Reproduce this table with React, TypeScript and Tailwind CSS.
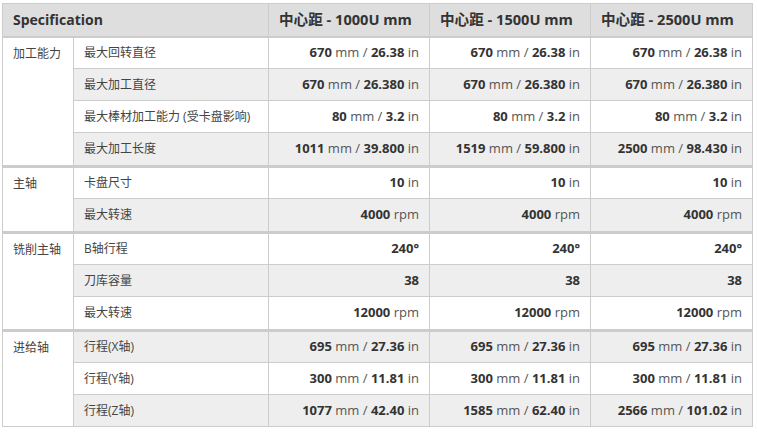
import React from 'react';

type Val = { n: string; u?: string; n2?: string; u2?: string };

interface Row {
  label: string;
  values: Val[];
}

interface Group {
  name: string;
  rows: Row[];
}

const mmIn = (a: string, b: string): Val => ({ n: a, u: 'mm /', n2: b, u2: 'in' });

const groups: Group[] = [
  {
    name: '加工能力',
    rows: [
      { label: '最大回转直径', values: [mmIn('670', '26.38'), mmIn('670', '26.38'), mmIn('670', '26.38')] },
      { label: '最大加工直径', values: [mmIn('670', '26.380'), mmIn('670', '26.380'), mmIn('670', '26.380')] },
      { label: '最大棒材加工能力 (受卡盘影响)', values: [mmIn('80', '3.2'), mmIn('80', '3.2'), mmIn('80', '3.2')] },
      { label: '最大加工长度', values: [mmIn('1011', '39.800'), mmIn('1519', '59.800'), mmIn('2500', '98.430')] },
    ],
  },
  {
    name: '主轴',
    rows: [
      { label: '卡盘尺寸', values: [{ n: '10', u: 'in' }, { n: '10', u: 'in' }, { n: '10', u: 'in' }] },
      { label: '最大转速', values: [{ n: '4000', u: 'rpm' }, { n: '4000', u: 'rpm' }, { n: '4000', u: 'rpm' }] },
    ],
  },
  {
    name: '铣削主轴',
    rows: [
      { label: 'B轴行程', values: [{ n: '240°' }, { n: '240°' }, { n: '240°' }] },
      { label: '刀库容量', values: [{ n: '38' }, { n: '38' }, { n: '38' }] },
      { label: '最大转速', values: [{ n: '12000', u: 'rpm' }, { n: '12000', u: 'rpm' }, { n: '12000', u: 'rpm' }] },
    ],
  },
  {
    name: '进给轴',
    rows: [
      { label: '行程(X轴)', values: [mmIn('695', '27.36'), mmIn('695', '27.36'), mmIn('695', '27.36')] },
      { label: '行程(Y轴)', values: [mmIn('300', '11.81'), mmIn('300', '11.81'), mmIn('300', '11.81')] },
      { label: '行程(Z轴)', values: [mmIn('1077', '42.40'), mmIn('1585', '62.40'), mmIn('2566', '101.02')] },
    ],
  },
];

// 数值加粗，单位颜色稍浅
function Value({ v }: { v: Val }) {
  return (
    <span>
      <b className="font-bold text-[#333]">{v.n}</b>
      {v.u && <span className="text-[#555]"> {v.u} </span>}
      {v.n2 && <b className="font-bold text-[#333]">{v.n2}</b>}
      {v.u2 && <span className="text-[#555]"> {v.u2}</span>}
    </span>
  );
}

const headCell = 'border border-[#ccc] border-b-2 text-left pl-[10px] font-bold text-[#333]';

export default function App() {
  let index = 0;

  return (
    <div className="bg-white w-[757px] h-[432px] pt-[3px] pl-[2px] font-['Open_Sans','Noto_Sans_CJK_SC',sans-serif] text-[12px] text-[#444]">
      <table className="border-collapse w-[750px] table-fixed">
        <colgroup>
          <col className="w-[71px]" />
          <col className="w-[195px]" />
          <col className="w-[161px]" />
          <col className="w-[161px]" />
          <col className="w-[162px]" />
        </colgroup>
        <thead>
          <tr className="bg-[#dedede] h-[33px]">
            <th colSpan={2} className={`${headCell} text-[14px]`}>
              Specification
            </th>
            <th className={`${headCell} text-[14.6px]`}>中心距 - 1000U mm</th>
            <th className={`${headCell} text-[14.6px]`}>中心距 - 1500U mm</th>
            <th className={`${headCell} text-[14.6px]`}>中心距 - 2500U mm</th>
          </tr>
        </thead>
        <tbody>
          {groups.map((g) =>
            g.rows.map((r, i) => {
              const striped = index++ % 2 === 1;
              const last = i === g.rows.length - 1;
              const isFinal = g === groups[groups.length - 1];
              const bottom = last && !isFinal ? 'border-b-[3px]' : '';
              const height = last && !isFinal ? 'h-[34px]' : 'h-[32px]';
              const bg = striped ? 'bg-[#eeeeee]' : 'bg-white';
              return (
                <tr key={g.name + r.label} className={height}>
                  {i === 0 && (
                    <td
                      rowSpan={g.rows.length}
                      className={`border border-[#ccc] ${isFinal ? '' : 'border-b-[3px]'} bg-white align-top pl-[10px] pt-[7px]`}
                    >
                      {g.name}
                    </td>
                  )}
                  <td className={`border border-[#ccc] ${bottom} ${bg} pl-[10px]`}>{r.label}</td>
                  {r.values.map((v, k) => (
                    <td key={k} className={`border border-[#ccc] ${bottom} ${bg} text-right pr-[10px] text-[13px]`}>
                      <Value v={v} />
                    </td>
                  ))}
                </tr>
              );
            })
          )}
        </tbody>
      </table>
    </div>
  );
}
